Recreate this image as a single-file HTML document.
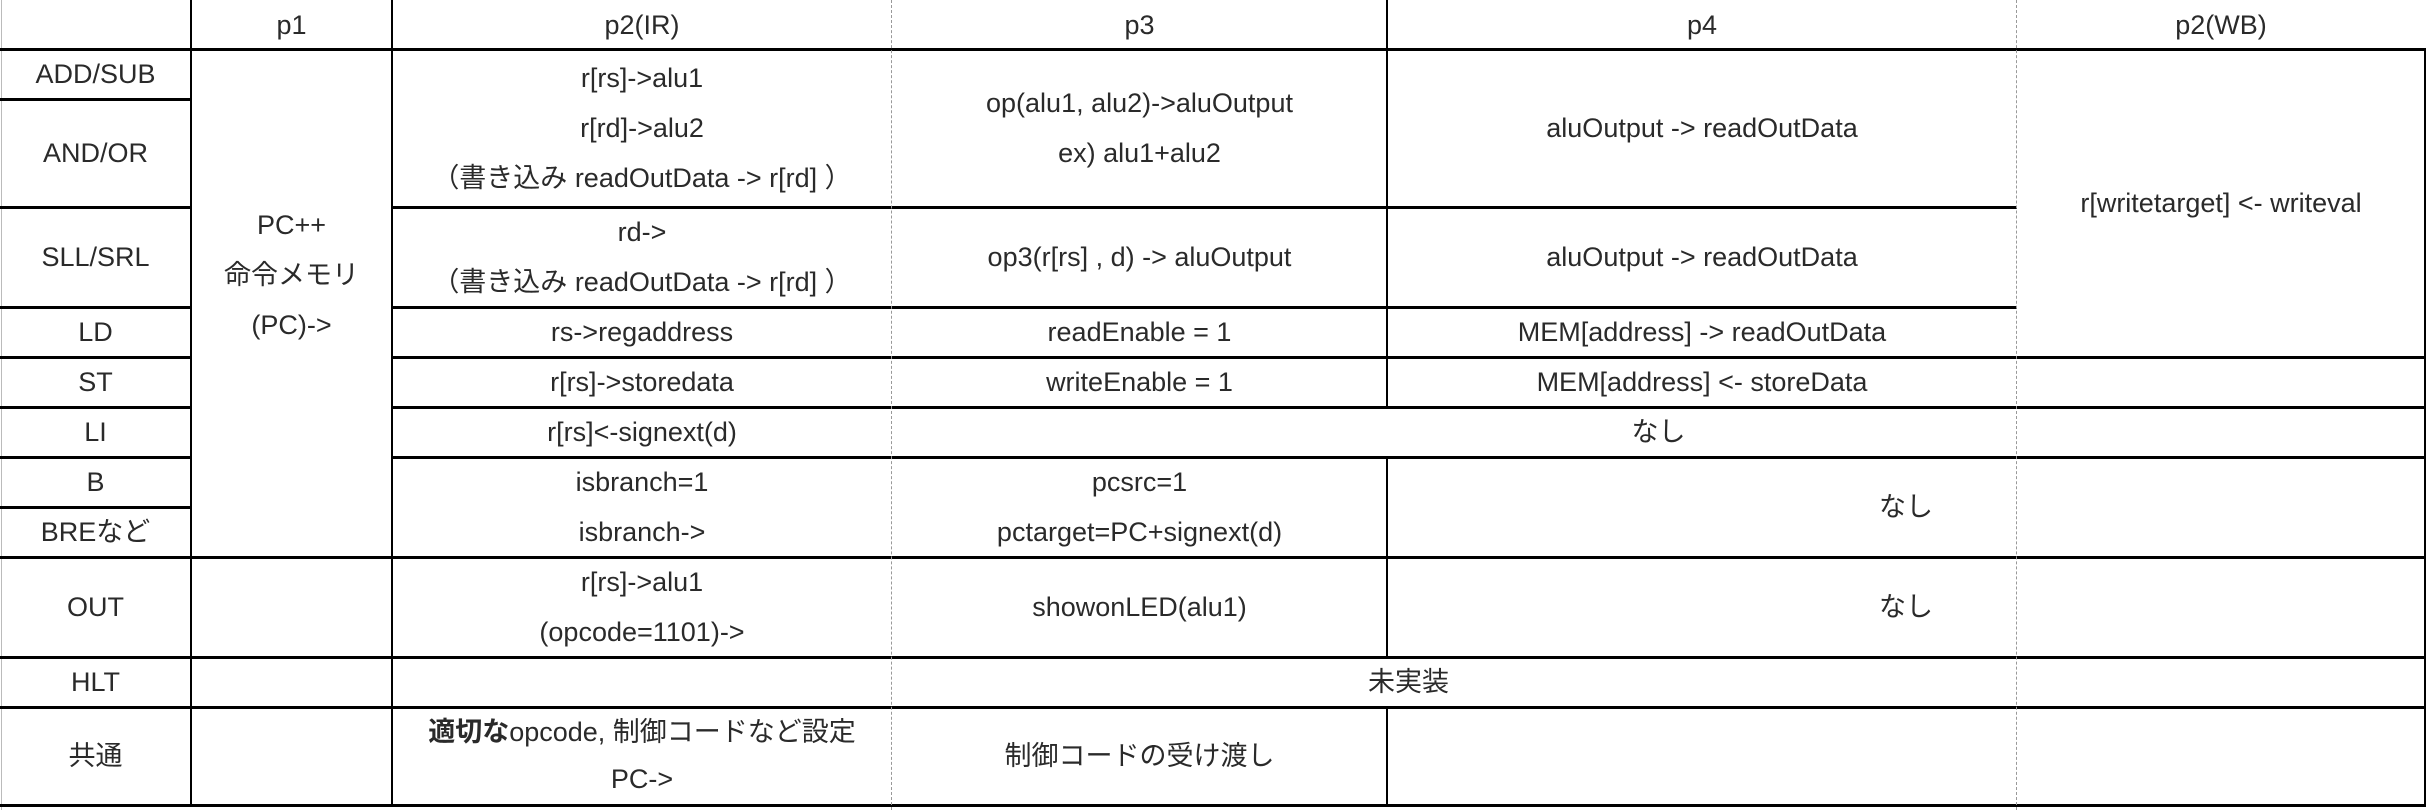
<!DOCTYPE html>
<html><head><meta charset="utf-8"><style>
html,body{margin:0;padding:0;background:#fff;}
body{width:2432px;height:810px;position:relative;overflow:hidden;font-family:"Liberation Sans","Noto Sans CJK JP",sans-serif;font-size:27px;color:#2a2a2a;}
.c{position:absolute;display:flex;align-items:center;justify-content:center;text-align:center;line-height:50px;white-space:nowrap;}
.h{position:absolute;height:3px;background:#000;}
.v{position:absolute;width:2px;background:#000;}
.d{position:absolute;width:0;border-left:1.5px dashed #999;}
.g{position:absolute;width:1px;background:#bbb;}
</style></head><body>
<div class="g" style="left:1px;top:0;height:810px"></div>

<div class="h" style="left:0;width:2426px;top:48px"></div>
<div class="h" style="left:0;width:191px;top:98px"></div>
<div class="h" style="left:0;width:191px;top:206px"></div>
<div class="h" style="left:392px;width:1625px;top:206px"></div>
<div class="h" style="left:0;width:191px;top:306px"></div>
<div class="h" style="left:392px;width:1625px;top:306px"></div>
<div class="h" style="left:0;width:191px;top:356px"></div>
<div class="h" style="left:392px;width:2034px;top:356px"></div>
<div class="h" style="left:0;width:191px;top:406px"></div>
<div class="h" style="left:392px;width:2034px;top:406px"></div>
<div class="h" style="left:0;width:191px;top:456px"></div>
<div class="h" style="left:392px;width:2034px;top:456px"></div>
<div class="h" style="left:0;width:191px;top:506px"></div>
<div class="h" style="left:0;width:2426px;top:556px"></div>
<div class="h" style="left:0;width:2426px;top:656px"></div>
<div class="h" style="left:0;width:2426px;top:706px"></div>
<div class="h" style="left:0;width:2426px;top:804px"></div>

<div class="v" style="left:190px;top:0;height:807px"></div>
<div class="v" style="left:391px;top:0;height:807px"></div>
<div class="v" style="left:1386px;top:0;height:408px"></div>
<div class="v" style="left:1386px;top:457px;height:200px"></div>
<div class="v" style="left:1386px;top:707px;height:100px"></div>
<div class="v" style="left:2424px;top:48px;height:759px"></div>
<div class="d" style="left:891px;top:0;height:810px"></div>
<div class="d" style="left:2016px;top:0;height:810px"></div>

<div class="c" style="left:191px;width:201px;top:0;height:49px">p1</div>
<div class="c" style="left:392px;width:500px;top:0;height:49px">p2(IR)</div>
<div class="c" style="left:892px;width:495px;top:0;height:49px">p3</div>
<div class="c" style="left:1387px;width:630px;top:0;height:49px">p4</div>
<div class="c" style="left:2017px;width:408px;top:0;height:49px">p2(WB)</div>

<div class="c" style="left:0;width:191px;top:49px;height:50px">ADD/SUB</div>
<div class="c" style="left:0;width:191px;top:99px;height:108px">AND/OR</div>
<div class="c" style="left:0;width:191px;top:207px;height:100px">SLL/SRL</div>
<div class="c" style="left:0;width:191px;top:307px;height:50px">LD</div>
<div class="c" style="left:0;width:191px;top:357px;height:50px">ST</div>
<div class="c" style="left:0;width:191px;top:407px;height:50px">LI</div>
<div class="c" style="left:0;width:191px;top:457px;height:50px">B</div>
<div class="c" style="left:0;width:191px;top:507px;height:50px">BREなど</div>
<div class="c" style="left:0;width:191px;top:557px;height:100px">OUT</div>
<div class="c" style="left:0;width:191px;top:657px;height:50px">HLT</div>
<div class="c" style="left:0;width:191px;top:707px;height:98px">共通</div>

<div class="c" style="left:191px;width:201px;top:200px;height:150px">PC++<br>命令メモリ<br>(PC)-&gt;</div>

<div class="c" style="left:392px;width:500px;top:49px;height:158px">r[rs]-&gt;alu1<br>r[rd]-&gt;alu2<br>（書き込み readOutData -&gt; r[rd] ）</div>
<div class="c" style="left:392px;width:500px;top:207px;height:100px">rd-&gt;<br>（書き込み readOutData -&gt; r[rd] ）</div>
<div class="c" style="left:392px;width:500px;top:307px;height:50px">rs-&gt;regaddress</div>
<div class="c" style="left:392px;width:500px;top:357px;height:50px">r[rs]-&gt;storedata</div>
<div class="c" style="left:392px;width:500px;top:407px;height:50px">r[rs]&lt;-signext(d)</div>
<div class="c" style="left:392px;width:500px;top:457px;height:100px">isbranch=1<br>isbranch-&gt;</div>
<div class="c" style="left:392px;width:500px;top:557px;height:100px">r[rs]-&gt;alu1<br>(opcode=1101)-&gt;</div>
<div class="c" style="left:392px;width:500px;top:707px;height:98px;line-height:47px"><span><b>適切な</b>opcode, 制御コードなど設定<br>PC-&gt;</span></div>

<div class="c" style="left:892px;width:495px;top:49px;height:158px">op(alu1, alu2)-&gt;aluOutput<br>ex) alu1+alu2</div>
<div class="c" style="left:892px;width:495px;top:207px;height:100px">op3(r[rs] , d) -&gt; aluOutput</div>
<div class="c" style="left:892px;width:495px;top:307px;height:50px">readEnable = 1</div>
<div class="c" style="left:892px;width:495px;top:357px;height:50px">writeEnable = 1</div>
<div class="c" style="left:892px;width:1533px;top:407px;height:50px">なし</div>
<div class="c" style="left:892px;width:495px;top:457px;height:100px">pcsrc=1<br>pctarget=PC+signext(d)</div>
<div class="c" style="left:892px;width:495px;top:557px;height:100px">showonLED(alu1)</div>
<div class="c" style="left:392px;width:2033px;top:657px;height:50px">未実装</div>
<div class="c" style="left:892px;width:495px;top:707px;height:98px">制御コードの受け渡し</div>

<div class="c" style="left:1387px;width:630px;top:49px;height:158px">aluOutput -&gt; readOutData</div>
<div class="c" style="left:1387px;width:630px;top:207px;height:100px">aluOutput -&gt; readOutData</div>
<div class="c" style="left:1387px;width:630px;top:307px;height:50px">MEM[address] -&gt; readOutData</div>
<div class="c" style="left:1387px;width:630px;top:357px;height:50px">MEM[address] &lt;- storeData</div>
<div class="c" style="left:1387px;width:1038px;top:457px;height:100px">なし</div>
<div class="c" style="left:1387px;width:1038px;top:557px;height:100px">なし</div>

<div class="c" style="left:2017px;width:408px;top:49px;height:308px">r[writetarget] &lt;- writeval</div>
</body></html>
